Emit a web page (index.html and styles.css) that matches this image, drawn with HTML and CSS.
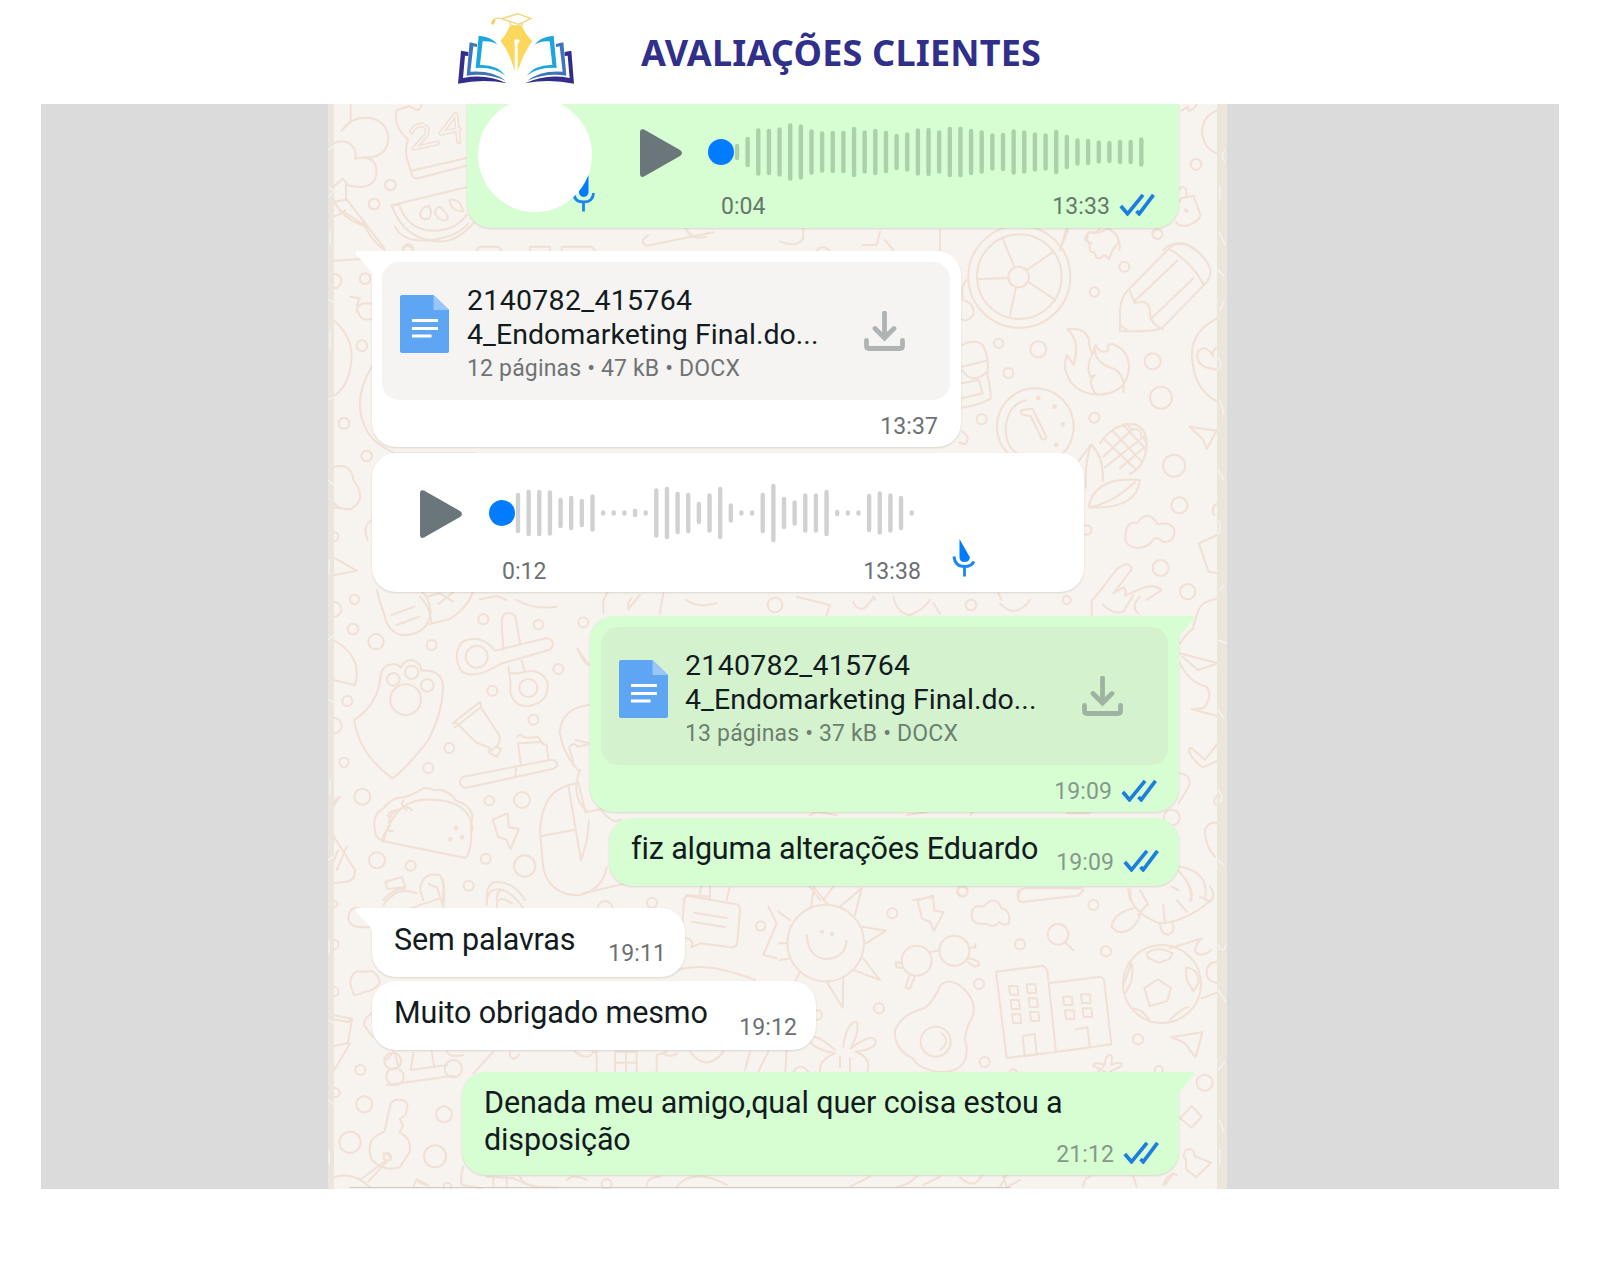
FILE: index.html
```html
<!DOCTYPE html>
<html lang="pt-BR">
<head>
<meta charset="utf-8">
<title>Avaliações Clientes</title>
<link rel="stylesheet" href="styles.css">
</head>
<body>
<svg class="defs" aria-hidden="true">
  <symbol id="checks" viewBox="0 0 36 23"><path d="M1.800 13l6.700 7.800L24 1.800M17.500 18l2.700 2.800L34.500 1.800"/></symbol>
  <symbol id="play" viewBox="0 0 44 50"><path d="M1 4.500Q1 0 5 1.500L41 22q4 3 0 6L5 48.500Q1 50 1 45.500Z"/></symbol>
  <symbol id="doc" viewBox="0 0 49 58">
    <path fill="#5ea6f3" d="M2 0H33.500L49 15V56q0 2-2 2H2q-2 0-2-2V2Q0 0 2 0Z"/>
    <path fill="#98c6f6" d="M33.500 0L49 15H33.500Z"/>
    <path fill="none" stroke="#fff" stroke-width="3.200" d="M12 25.500H38M12 33.500H38M12 41H31.500"/>
  </symbol>
  <symbol id="download" viewBox="0 0 41 41"><path d="M20.500 2V26M11 17.500l9.500 9.500 9.500-9.500M2.500 29.500V35q0 2.500 2.500 2.500H36q2.500 0 2.500-2.500V29.500"/></symbol>
</svg>

<header class="header">
  <svg class="logo" viewBox="0 0 405 270">
    <g fill="#332e8c"><path d="M33 137l22 4v12l-10-1-6 67q70-14 132 16Q100 220 24 236Z"/><path d="M364 137l-20 4v12l9-1 6 67q-70-14-134 16 73-15 147 1Z"/></g>
    <g fill="#3c74bd"><path d="M59 112l22 5v9l-11-2-9 76q65-5 106 27-58-25-117-15Z"/><path d="M340 112l-22 5v9l11-2 9 76q-65-5-106 27 58-25 117-15Z"/></g>
    <g fill="#1ca6df"><path d="M86 92q40 3 57 27-18-12-45-10l-8 71q50-2 77 32-36-27-90-23Z"/><path d="M311 92q-40 3-57 27 18-12 45-10l8 71q-50-2-77 32 36-27 90-23Z"/></g>
    <path fill="#fbd75b" d="M179 63h37q9 24 31 45-26 35-44 91V115q6-2 6-7t-10-5-5 12v84q-15-58-43-91 20-22 28-45Z"/>
    <path fill="none" stroke="#f3d77d" stroke-width="4" d="M155 41l48-15 40 15-38 17Z M155 41q-24-6-29 12M156 41l45-14M180 51v8q18 8 37 0v-6"/>
    <ellipse cx="130" cy="51" rx="5" ry="9" fill="#f3cf68" transform="rotate(25 130 51)"/>
  </svg>
  <h1 class="title">AVALIAÇÕES CLIENTES</h1>
</header>

<main class="panel">
<section class="chat">
  <svg class="wallpaper" viewBox="328 104 899 1085">
    <g transform="translate(320 100) scale(.33333)">
      <path d="M92 15v50L65 92q30-45 85-38 50 10 55 58 0 50-50 60h-25M40 130q40-18 62 14 8 18 3 32M105 176q70-14 64 48-10 50-84 32L68 236l-28 24M78 255v45l-38 5M78 295l115 150M70 335l65 42M40 350q20-5 36-20M40 300q30 60 95 78"/>
      <path d="M270 18l-40 12q-12 50 34 88 -14 40 4 80l10 32q8 8 20 4l145-38M275 212l165-38M270 18q30 25 35-4"/>
      <path d="M275 95q10-22 32-20 22 8 10 32l-35 38 70-16M405 45l-42 55 55-12M408 45l8 80" stroke-width="15"/>
      <path class="cut" d="M275 95q10-22 32-20 22 8 10 32l-35 38 70-16M405 45l-42 55 55-12M408 45l8 80"/>
      <path d="M215 316l240-58M215 316q40 112 155 108 50-6 95-60M240 322q30 74 110 70 60-4 90-48M215 316l25-2M300 345q0-22 25-28 15 20 3 38-20 8-28-10ZM345 340q0-15 14-20 25 20 25 38-25 10-39-18ZM388 300q15-5 32 10l10 24q-38 0-42-34ZM248 446q15-18 30 0"/>
      <circle cx="211" cy="255" r="16"/><circle cx="162" cy="312" r="16"/>
    </g>
    <g transform="translate(320 230) scale(.33333)">
      <path d="M40 92l88-5 20 20M128 -30q20 60 66 90M225 -10q25 50 105 40 80-8 115-50M470 60l10-10h55l10 12M630 62v-12h60v12M725 62v-12h90l10 12M985 15q-30 20-5 32l200-40M1090-20q20 55 70 40M90 200l30 5-10 20M110 245q0-30 44-24M115 245q5 30 38 22M40 270q55 45 55 112-5 84-55 118M155 410q-60 100-18 185 20 45 90 75h240M40 710q55-12 60 40 45 60-10 88l-50-6M30 810l30 25-20-4M155 870q-30 20-12 60M20 970l90 52-70 14M320 1100l40-10 40 25M480 1108l50-10 30 12"/>
      <circle cx="42" cy="153" r="22"/><circle cx="135" cy="146" r="16"/><circle cx="126" cy="347" r="16"/><circle cx="72" cy="580" r="16"/><circle cx="140" cy="678" r="16"/><circle cx="42" cy="920" r="13"/><circle cx="265" cy="58" r="15"/><circle cx="103" cy="1108" r="14"/>
    </g>
    <g transform="translate(760 230) scale(.33333)">
      <circle cx="778" cy="140" r="153"/><circle cx="778" cy="140" r="127"/><circle cx="776" cy="141" r="31"/>
      <path d="M764 113L728 26M800 120l78-53M803 155l82 54M768 172l-18 84M745 144l-93 4M904 50l20-50M620 150q-20 20-10 60 35 10 30 45-20 25-35 12M540 60V0M310 45l40 0 10-40M375 30l25 30M60 35q50 20 70-10V-10M170 62q15-20 40 0"/>
      <path d="M985 8l32 0 26-12q35 15 33 42-22 20-28 50-10-12-18-12-8 14-22 6 0-16-18-18l-2-24-8-10Z"/>
      <path d="M1080 304V240q4-45 32-68L1230 52q28-20 60-5 52 35 62 75 0 26-22 45L1205 295q-20 10-125 9ZM1228 58q65 35 104 108M1125 212L1252 92M1172 268L1300 145M1108 180l17 40q38-15 45 20-5 38 38 58M1080 285l25 18"/>
      <path d="M922 298q50-10 65 30 0 30 10 42l10-26q10 30 38 18-8-20 14-20 48 20 48 70-5 80-95 82-80-4-97-80 0-30 6-38l20 28q22-70-19-106ZM1005 360q-30 40-15 80l14-4-12 15q0 25 18 42M1005 360q0 40 60 58 32 22 25 68"/>
      <circle cx="826" cy="590" r="115"/><path d="M825 686q-90-5-88-95 8-68 60-80"/><path d="M785 540l32-4q12 22 42 85-4 12-14 5l-33-68-24-4q-10-10-3-14Z"/>
      <path d="M606 345q40-20 62 0 22 40 14 90 12 50 10 70-30 20-86 28M606 410l72-18M606 420q30 45 72 8M606 460l50-10 12 40-62 15M606 605q28 15 10 38l-20-5"/>
      <path d="M955 695l38-52q40 40 35 110M993 643q-20 60-15 130M985 832q20-95 155-82-10 90-155 82q70-10 140-76M1020 640q40-60 100-58 40 10 40 60-2 65-50 90M1035 630l95 90M1060 605l85 90M1090 585l70 75M1030 680l90-85M1035 712l120-95M1080 715l70-60M1080 590q20-20 34 10 30-10 30 22 20 5 14 34"/>
      <path d="M1098 905q2-30 34-26 30-45 62 4 48-10 50 25-4 30-34 28-12-14-28-10-18 28-48 28-48-4-36-49ZM1372 265q-80 40-76 115 5 100 76 135M1372 350q-20 15-12 30-20-38-45-18-12 35 22 50l35 8M1288 590l82 12-30 55-12-30ZM1372 915l-55 25 28 85 27 5M1372 820q-20 10-10 35"/>
      <path d="M1000 1108l70-90q40-30 45 0l-55 72 30-18q12 8 5 25l50-22q40-15 60 5l-45 30M340 1100l5 10M715 1090l10 20"/>
      <circle cx="1193" cy="13" r="14"/><circle cx="1093" cy="110" r="15"/><circle cx="1003" cy="186" r="14"/><circle cx="716" cy="340" r="14"/><circle cx="835" cy="358" r="24"/><circle cx="745" cy="429" r="15"/><circle cx="1178" cy="394" r="24"/><circle cx="1203" cy="503" r="33"/><circle cx="665" cy="568" r="15"/><circle cx="1003" cy="563" r="15"/><circle cx="1242" cy="707" r="33"/><circle cx="1258" cy="826" r="24"/><circle cx="1202" cy="1014" r="24"/><circle cx="1283" cy="1085" r="23"/><circle cx="980" cy="900" r="14"/><circle cx="835" cy="504" r="4"/><circle cx="884" cy="530" r="4"/><circle cx="908" cy="583" r="4"/><circle cx="889" cy="644" r="4"/>
    </g>
    <g transform="translate(320 600) scale(.33333)">
      <path d="M170-30q10 40 22 70 10 60 60 66 75-5 80-72-5-50-40-70M215 45l68-25M230 75l68-25M330 72l60-15q60-40 70-90M300-10q30 30 35 80M355 12l50-40M590 0q50 30 120 20M850 40V0l20-35M960-15l-35 42q-5-18 10-32M1030-20l-10 60M1100 0q30 25 90 10"/>
      <path d="M550 150l-5-85q2-28 22-26 20 0 22 25l12 70M525 152l155-38q22 4 17 24-4 12-18 14L540 192M605 182l10 34M525 152q-45-55-100-25-30 40 0 88 40 25 116-23M565 200q10 60 5 75 15 50 60 42 60-10 52-72-20-40-65-30-30 10-50 2"/><circle cx="470" cy="170" r="33"/><circle cx="625" cy="264" r="27"/>
      <path d="M182 222q8-28 38-30 20 3 22 12 10-24 32-24 28 5 30 32 60-5 65 45 0 80-45 165Q255 510 217 535 115 460 103 360q75-50 79-138Z"/><circle cx="257" cy="299" r="46"/><circle cx="220" cy="238" r="19"/><circle cx="275" cy="217" r="20"/><circle cx="322" cy="256" r="19"/>
      <path d="M398 370l82-64 4 18 54 82q5 20-10 35l16 6-15 24-22-14 2-14-40-15-60-60ZM405 382l78-60M508 455q18-15 25-14M592 410q10-10 12-4 10 12 50 4l14 22q18 2 12 10l6 38M602 490l-8-60 74-4M430 530l260-50q20-2 22 12 0 12-18 16L440 563q-20-2-20-16 0-10 10-17ZM588 505l-2 24"/>
      <path d="M165 690q-10-45 25-65 30-35 56-32 20-4 48-18 20-20 50-4 40-8 64 32 40 8 50 45-8 30-4 48 0 60-18 78L185 722q-20-10-20-32ZM190 725q30-120 120-126 140-5 148 90M250 602q-12 12 10 28M236 630q20-20 40 0M205 650q-5-15 30-20M210 680q-10-30 20-50M185 720l15-30 18 4"/>
      <path d="M518 658l45-18 4 42 30 4-26 62-12-30-24-6ZM807 315q-80 8-88 80 10 70 60 120M807 430l-40-10M748 440q15-15 25 0l34-8M760 485l-12-40M780 510q-30 80 22 126l40-8q40 50 60 30M745 556q-80 20-85 140l10 110q20 80 110 80 70-20 80-85M745 556l38 225 18-60 6-60M665 708l96-18M745 556l30-8 22 90M772 145q22 50 35 50l-35-48M40 120q90 50 65 135l-65-15M35 700l70 110q0 35-30 36l-35 4M50 810l30-70M40 785l15-35M35 610l24-20-20 30"/>
      <path d="M196 845l50-14 10 30-54 6ZM190 900q30-35 65-35M300 870q5-55 60-45 20 40 10 90M325 852l25 10M300 870l10 30M500 895q0-50 35-50 50 5 80 55M530 900q0-30 20-30M790 880l120-28M1090 900l10-15 70 5M1170 900v-40"/>
      <circle cx="99" cy="87" r="16"/><circle cx="168" cy="125" r="23"/><circle cx="335" cy="135" r="15"/><circle cx="490" cy="58" r="15"/><circle cx="655" cy="74" r="14"/><circle cx="790" cy="67" r="15"/><circle cx="517" cy="272" r="15"/><circle cx="715" cy="207" r="15"/><circle cx="82" cy="303" r="15"/><circle cx="42" cy="377" r="23"/><circle cx="388" cy="444" r="15"/><circle cx="640" cy="359" r="15"/><circle cx="325" cy="504" r="15"/><circle cx="72" cy="487" r="14"/><circle cx="127" cy="590" r="24"/><circle cx="508" cy="602" r="14"/><circle cx="606" cy="600" r="24"/><circle cx="171" cy="781" r="24"/><circle cx="272" cy="797" r="15"/><circle cx="497" cy="776" r="15"/><circle cx="614" cy="798" r="32"/><circle cx="446" cy="857" r="15"/><circle cx="408" cy="684" r="4"/><circle cx="391" cy="718" r="4"/><circle cx="426" cy="712" r="4"/><circle cx="42" cy="28" r="22"/><circle cx="1365" cy="15" r="22"/>
    </g>
    <g transform="translate(780 600) scale(.33333)">
      <path d="M50-10l100 25-10 30M220 5q5 20 28 22 15-8 30-32M340-10q10 50 50 55 40-15 60-45M480 40l-20-30M660 10q45 50 90-10M970 15q30 30 60 20l30-50M935 45V0M1080-10q-30 30-5 50M1240 80l15-50q10-25 58-35M1200 130q20-30 40-45M1198 160l115 30-60 20-45-40M1200 190q30 60 80 70 20 30-10 65l-35 2 78 22M1235 445l40 35 38-50M1228 450q0 22 40 52l45-20M1235 445q-10-2-8 12M1198 520q40 5 28 40l-30 50M1313 585q-20 20-5 30M1313 670q-25-10-38 20 0 50 30 80M1200 800q90 15 75 100M1200 820q30 20 35 80M1195 870l-20-10M90 645l20-10 60 10M380 645l60-8M570 645l10-8M860 640h70M90 860l30 40M130 900l30-40M715 895q0-30 20-30h170M400 900l60-10M1050 900l-5-35M1195 812q55 60 35 90"/>
      <circle cx="573" cy="15" r="16"/><circle cx="1175" cy="653" r="24"/><circle cx="547" cy="875" r="15"/><circle cx="860" cy="0" r="12"/>
    </g>
    <g transform="translate(320 890) scale(.33333)">
      <path d="M190 45q40-60 100-35M270 55l90-30M350-10l20 60M370-30v60M500 45q0-65 60-40 30 20 50 50M530 50q0-40 45-10M85 80q5-38 45-22M85 80q0 40 70 30M95 260q10-20 30-15l30-2q20 10 25 35-18 25-42 27l-34 12q-20-40-9-57ZM155 370q-30 20-20 40l22 30M40 375l56 12-12 72-44 10M40 388l45 8 10-10M40 545l50-85"/>
      <path d="M1105 18q60 10 145 25 12 5 10 20l-8 95q-2 15-20 14l-90-12-28 12q8-15-6-24-25-5-22-25l6-88q2-18 13-17ZM1122 68l98 16M1116 95l98 16M1140 15l5-40M1220 30l8-35M1345 50q20 40 25 50l-40 95 40 10M1040 255q90-55 265 15M200 510l20-25M225 490l10 40M280 490l-8 50 110-15M335 485l8 46M200 585l200-28M380 485q10 20 50 10M460 550l60-65M570 485v15q15 15 28-8M765 485q40 30 55 0l10 5M830 545V485M885 545V485h65v60M885 518h65M918 485v60M1010 545V495l30-10M1070 490q-8 15-45 0M1110 485q50 65 100 0M1290 485l-15 55M1345 485l-30 60"/>
      <path d="M212 640l12-10q40-5 38 20l-5 25-18 12 10 20-10 20q38 20 30 60l-30 45q-50 15-85-25-20-60 35-80l5-5ZM200 810l-80 60M200 815l-55 60M190 790q20 0 22 20M40 862q60-20 110 30M430 830q-10 30-5 55l60 10M500 860l80 5 70 30M280 892l10-25 35 20-30-10M560 862v30M520 860v28M600 860q10 35 110 32M740 870q20-20 60 0M980 890q0-30 40-30M1070 890q50-60 150-5"/>
      <circle cx="218" cy="513" r="25"/><circle cx="225" cy="560" r="26"/><circle cx="400" cy="536" r="26"/><circle cx="121" cy="540" r="15"/><circle cx="133" cy="643" r="24"/><circle cx="372" cy="673" r="24"/><circle cx="90" cy="757" r="32"/><circle cx="345" cy="799" r="33"/><circle cx="202" cy="801" r="11"/><circle cx="996" cy="38" r="15"/><circle cx="1322" cy="108" r="14"/><circle cx="42" cy="163" r="14"/><circle cx="42" cy="305" r="14"/><circle cx="45" cy="608" r="14"/><circle cx="42" cy="42" r="10"/><circle cx="855" cy="55" r="22"/><circle cx="860" cy="883" r="15"/><circle cx="382" cy="890" r="12"/>
    </g>
    <g transform="translate(780 890) scale(.33333)">
      <circle cx="137" cy="159" r="115"/><path d="M80 135q5 70 60 72 55-2 60-55M92 52l10-60 40 50M180 50l65-55-20 80M248 110l70 12-60 38M250 205l50 65-75-28M140 275l48 78 2-90M22 160h-25M30 205l-30 5M30 90l-35-25M60 245l-15 30M20 480l-4 65"/><circle cx="126" cy="125" r="3"/><circle cx="156" cy="132" r="3"/>
      <path d="M413 32l45-16 5 45 28 6-30 57-10-28-25-10ZM575 75q2-35 35-25 35-40 55 5 28 5 22 45-15 8-30-4-15 20-40 5-40 5-42-26Z"/>
      <circle cx="410" cy="212" r="45"/><circle cx="523" cy="182" r="45"/><path d="M454 185l26-4M365 220l-18-4 2 16 18 2M388 258l-12 36 14 2 14-34M568 175l18-6M586 163v12M565 205q35 5 32 20-10 12-34-10"/>
      <circle cx="834" cy="133" r="31"/><path d="M855 157l25 24"/>
      <path d="M475 300q10-35 55-20 60 40 50 95-35 60-20 95 5 80-85 76-60-10-75-40-60-30-55-85 20-50 90-67 20-15 40-54Z"/><circle cx="467" cy="455" r="45"/><path d="M485 430q30 25-5 50"/>
      <path d="M648 245l142-18 12 14 26 245-148 18ZM806 280l156-20 10 8 22 195-166 23M728 438l36-6 6 62-36 5ZM888 418l34-6 8 60-34 6M687 288h25l3 26h-25ZM740 283h26l3 26h-26ZM692 330h25l3 27h-25ZM746 325h25l3 26h-25ZM696 373h25l3 26h-25ZM750 366h25l3 27h-25ZM849 320h26l3 25h-26ZM903 313h26l3 26h-26ZM855 361h26l3 26h-26ZM908 355h26l3 26h-26Z"/>
      <circle cx="1146" cy="282" r="117"/><path d="M1134 268l39 26-12 40-52 14-16-54ZM1100 190q30-25 78 0l-10 18-32 10-32-14ZM1230 235q28 10 25 45l-15 24-20-34-2-38ZM1032 280l22-60q8 20-2 60l-15 28M1060 355q30 5 48 36M1170 390q40-40 55-38M1170 175l95-30q-20 18-20 40 20 20 48-5M1313 215q-35 0-33 40 5 20 33 25M1265 325l48-18"/>
      <path d="M1172 442l95-15-20 75-20-25q-5-20-55-35ZM715 0q-8 40 15 35l165-18 15-17M1052 0q-10 60 85 100 80-5 150-65M1080 0l25 45M1150 45l5 55M1100 45l-25 30M1190 30l30 35M1290-10q20 30 0 45l-30-15M1060 55q-60 15-65 55 20 30 60 5 25-25 25-45M1140 105q5 30 25 30 25-15 10-40"/>
      <path d="M190 470q10-75 40-75 10 30-18 80 70-50 75-20 0 22-60 30 50 20 35 60M165 480q-70-60-75-30 5 25 75 40-50 20-45 55M210 505v40M180 500v30M40 545q20-30 45 0M975 520q0-25 18-25 5 10 0 30 35-15 32 3l-35 17M975 525q-30-12-35 2l35 18M955 545l15-15"/>
      <path d="M1200 685l35-37 30 32-30 33ZM1213 790q5-20 28-8l2 16 50 20-45 44-30-25v-30q-12-5-5-17ZM1150 885q15-40 40-30M1180 850l-25 35M670 860l10 32 40-22M660 890l20-35M540 862q40 40 65-5M210 890l60-30M350 892q40-10 60-32M430 885l50-25M910 890q0-25 20-30M1060 860l10 30"/>
      <circle cx="337" cy="70" r="15"/><circle cx="548" cy="2" r="15"/><circle cx="940" cy="45" r="15"/><circle cx="720" cy="163" r="15"/><circle cx="978" cy="184" r="15"/><circle cx="597" cy="282" r="15"/><circle cx="297" cy="355" r="15"/><circle cx="614" cy="516" r="15"/><circle cx="1074" cy="448" r="15"/><circle cx="1274" cy="578" r="24"/><circle cx="112" cy="375" r="14"/><circle cx="1136" cy="540" r="12"/><circle cx="700" cy="548" r="10"/>
    </g>
    <g transform="translate(1060 90) scale(.33333)">
      <path d="M365 62l18-12 4 14 16-10 6-10M470 62q-42 15-44 68 8 48 44 60M357 300q10-18 22 0v16M352 345l12-20 36-8 22 58q-5 20-40 32-30 2-34-12M376 358l8 4-6 4ZM20 415L0 480M75 450q5-30 30-22l15-10M150 418q35 25 28 62M75 450l20 10M310 480q40-40 95 0"/>
      <circle cx="408" cy="223" r="16"/><circle cx="292" cy="432" r="15"/>
    </g>
    <path class="edge" d="M328 104h6v1085h-6ZM1217 104h10v1085h-10Z"/>
    <path class="edge-lines" d="M328 150l6-4M328 187l6 4-6 6M330 230v14M328 300l5 2M330 330v20M328 400l6-3M328 480l6 5M329 560v14M328 640l6-5M328 700l5 2M330 780v14M328 860l5-3M329 940v14M328 1020l5 3M328 1100l6 5M329 1150v14M1225 150q-5 6 0 12M1220 186v14M1219 232l6 12M1218 270l6 6M1220 310l4-8M1218 358q6 6 0 12M1220 400l4 14M1218 470l6 10M1218 520q5 7 0 14M1220 590l4-5M1218 640l8 3M1218 710l6 8M1218 790q6 6 2 12M1218 860l6 5M1218 945q5 10 8 0M1218 990l8 12M1218 1070l7-8M1219 1120l5 12M1220 1150v14"/>
    <path class="bottom-line" d="M350 1187.500H1010"/>
  </svg>

  <div class="messages">
    <article class="bubble out audio first">
      <svg class="avatar" viewBox="477 98 124 115">
        <g fill="none" stroke="#1b86ee" stroke-width="2.800"><path d="M574 193q0 9 9.500 9t10-9M583.500 202v9.500"/></g>
        <rect x="579" y="172" width="9.500" height="25" rx="4.700" fill="#027cff"/>
        <circle cx="535" cy="155" r="57" fill="#fff"/>
      </svg>
      <svg class="play"><use href="#play"/></svg>
      <div class="track">
        <svg class="wave" viewBox="0 0 450 60" data-bars="16 30 47 46 49 57 55 45 41 42 42 50 43 46 42 36 39 47 48 43 50 50 46 43 37 38 45 43 39 37 44 34 27 26 23 22 24 24 29"></svg>
        <div class="meta"><span>0:04</span><span class="stamp">13:33<svg class="checks"><use href="#checks"/></svg></span></div>
      </div>
    </article>

    <article class="bubble in tail file">
      <div class="card">
        <svg class="doc"><use href="#doc"/></svg>
        <div class="info">
          <p class="name">2140782_415764<br><span class="rest">4_Endomarketing Final.do...</span></p>
          <p class="detail">12 páginas • 47 kB • DOCX</p>
        </div>
        <svg class="download"><use href="#download"/></svg>
      </div>
      <span class="stamp">13:37</span>
    </article>

    <article class="bubble in audio second">
      <svg class="play"><use href="#play"/></svg>
      <div class="track">
        <svg class="wave" viewBox="0 0 432 60" data-bars="40 46 46 45 30 34 28 37 5 5 5 8 5 49 52 42 40 22 39 52 19 5 5 40 58 32 25 39 39 46 6 5 5 38 43 39 34 5"></svg>
        <div class="meta"><span>0:12</span><span class="stamp">13:38</span></div>
      </div>
      <svg class="mic" viewBox="0 0 26 40"><path fill="#027cff" d="M8.500 0L19 18.500Q18 23 13.500 23 8.500 23 8.500 18Z"/><path fill="none" stroke="#1b86ee" stroke-width="2.800" d="M3 17.500q1 10 10.500 10 7 0 9.500-5M13.500 28v9.500"/></svg>
    </article>

    <article class="bubble out tail file">
      <div class="card">
        <svg class="doc"><use href="#doc"/></svg>
        <div class="info">
          <p class="name">2140782_415764<br><span class="rest">4_Endomarketing Final.do...</span></p>
          <p class="detail">13 páginas • 37 kB • DOCX</p>
        </div>
        <svg class="download"><use href="#download"/></svg>
      </div>
      <span class="stamp">19:09<svg class="checks"><use href="#checks"/></svg></span>
    </article>

    <article class="bubble out text changes">
      <p>fiz alguma alterações Eduardo</p>
      <span class="stamp">19:09<svg class="checks"><use href="#checks"/></svg></span>
    </article>

    <article class="bubble in tail text speechless">
      <p>Sem palavras</p>
      <span class="stamp">19:11</span>
    </article>

    <article class="bubble in text thanks">
      <p>Muito obrigado mesmo</p>
      <span class="stamp">19:12</span>
    </article>

    <article class="bubble out tail text welcome">
      <p>Denada meu amigo,qual quer coisa estou a<br>disposição</p>
      <span class="stamp">21:12<svg class="checks"><use href="#checks"/></svg></span>
    </article>
  </div>
</section>
</main>
<script src="waveform.js"></script>
</body>
</html>
```
FILE: styles.css
```css
* { box-sizing: border-box; }

body {
  margin: 0;
  background: #fff;
  font-family: Roboto, "Liberation Sans", sans-serif;
  color: #121b20;
}

p, h1 { margin: 0; }
svg { display: block; flex: none; }
.defs { display: none; }

.header {
  height: 104px;
  padding: 5px 0 0 450px;
  display: flex;
}
.logo { width: 135px; height: 90px; }
.title {
  margin: 21px 0 0 56px;
  font: 700 36px/54px "Noto Sans", "Open Sans", sans-serif;
  letter-spacing: .2px;
  color: #30308a;
  white-space: nowrap;
}

.panel {
  width: 1518px;
  height: 1085px;
  margin-left: 41px;
  padding-left: 287px;
  background: #dbdbdb;
}
.chat {
  width: 899px;
  height: 1085px;
  display: grid;
  overflow: hidden;
  background: #f7f3ee;
}
.wallpaper, .messages { grid-area: 1 / 1; }
.wallpaper {
  width: 899px;
  height: 1085px;
  fill: none;
  stroke: #f0e0d5;
  stroke-width: 6;
  stroke-linejoin: round;
  stroke-linecap: round;
}
.wallpaper .cut { stroke: #f7f3ee; stroke-width: 6; }
.wallpaper .edge { fill: #ebe5dc; stroke: none; }
.wallpaper .edge-lines { stroke: #f6f2eb; stroke-width: 1.5; }
.wallpaper .bottom-line { stroke: #cfcac5; stroke-width: 1; }

.messages {
  position: relative;
  display: flex;
  flex-direction: column;
  align-items: flex-start;
  padding: 0 48px 0 44px;
}

.bubble {
  position: relative;
  display: flex;
  align-items: flex-start;
  border-radius: 24px;
  box-shadow: 0 1px 2px rgba(70, 60, 40, .16);
  white-space: nowrap;
}
.in { background: #fff; }
.out { background: #d7fdd2; align-self: flex-end; }
.in.tail { border-top-left-radius: 0; }
.out.tail { border-top-right-radius: 0; }
.tail::before {
  content: "";
  position: absolute;
  top: 0;
  width: 18px;
  height: 25px;
  background: inherit;
}
.in.tail::before { left: -17px; clip-path: polygon(2px 0, 100% 0, 100% 100%, 15px 19px, 0 2px); }
.out.tail::before { right: -16px; clip-path: polygon(0 0, 16px 0, 18px 2px, 3px 19px, 0 100%); }

.stamp {
  display: flex;
  font-size: 23px;
  line-height: 28px;
  letter-spacing: .1px;
  color: #6c7073;
}
.out .stamp { color: #84998a; }
.checks {
  width: 36px;
  height: 23px;
  margin: 1px 0 0 9px;
  fill: none;
  stroke: #1c7fdd;
  stroke-width: 3.7;
}

.play { width: 44px; height: 50px; fill: #6b767b; }
.wave { width: 100%; height: 60px; }
.in .wave { stroke: #cfd1d2; }
.out .wave { stroke: #aecfac; }
.wave .dot { fill: #027cff; stroke: none; }
.wave .bars { stroke-width: 4.4; stroke-linecap: round; }
.meta {
  display: flex;
  justify-content: space-between;
  padding-left: 13px;
  font-size: 23px;
  line-height: 28px;
  color: #6c7073;
}
.out .meta, .out .meta .stamp { color: #64796b; }
.meta .checks { margin-top: 0; }

.first {
  width: 712px;
  height: 124px;
  padding-left: 10px;
  margin-bottom: 23px;
  border-top-left-radius: 0;
  border-top-right-radius: 0;
}
.avatar { width: 124px; height: 115px; margin-top: -6px; }
.first .play { margin: 24px 25px 0 38px; }
.first .track { width: 447px; padding-top: 18px; }
.first .wave { width: 450px; }
.first .meta { margin-top: 11px; }

.second {
  width: 712px;
  height: 139px;
  padding-left: 47px;
  margin-bottom: 24px;
}
.second .play { margin: 36px 26px 0 0; }
.second .track { width: 432px; padding-top: 30px; }
.second .meta { margin-top: 15px; }
.mic { width: 26px; height: 40px; margin: 86px 0 0 30px; }

.file {
  flex-direction: column;
  width: 589px;
  height: 196px;
  padding: 11px 10px 0;
  margin-bottom: 6px;
}
.out.file { padding-left: 11px; }
.card {
  display: flex;
  align-items: flex-start;
  width: 568px;
  height: 138px;
  padding: 22px 0 0 18px;
  border-radius: 17px;
  background: #f5f4f2;
}
.out .card { width: 567px; background: #d5f2cf; }
.doc { width: 49px; height: 58px; margin-top: 11px; }
.info { width: 397px; margin-left: 18px; }
.out .info { margin-left: 17px; }
.name { font-size: 28.5px; line-height: 34px; letter-spacing: .3px; }
.rest { letter-spacing: .02px; }
.detail { margin-top: 2px; font-size: 23px; line-height: 30px; letter-spacing: .17px; color: #6f7375; }
.out .detail { color: #6c806f; }
.download {
  width: 41px;
  height: 41px;
  margin-top: 27px;
  fill: none;
  stroke: #b0b3b4;
  stroke-width: 4.8;
  stroke-linecap: round;
}
.out .download { stroke: #9eb4a1; }
.file .stamp { align-self: flex-end; margin: 13px 13px 0 0; }
.out.file .stamp { margin-right: 12px; }

.text {
  height: 68px;
  justify-content: space-between;
  padding: 12px 20px 0 22px;
  font-size: 30.5px;
  line-height: 37px;
  letter-spacing: -.14px;
}
.text .stamp { margin-top: 19px; }
.text .checks { margin-top: 0; }
.changes { width: 570px; margin-bottom: 22px; }
.speechless { width: 313px; height: 69px; padding-top: 13px; margin-bottom: 4px; }
.speechless .stamp { margin: 19px -1px 0 0; }
.thanks { width: 444px; height: 69px; padding-top: 13px; margin-bottom: 22px; }
.thanks .stamp { margin: 20px -1px 0 0; }
.welcome { width: 717px; height: 103px; padding-top: 13px; line-height: 36.5px; }
.welcome .stamp { margin: 56px 0 0 -60px; }
```
FILE: waveform.js
```js
// Draws the playhead and the amplitude bars of every voice message.
const NS = "http://www.w3.org/2000/svg";
const START = 29;
const STEP = 10.64;

document.querySelectorAll(".wave").forEach((wave) => {
  const d = wave.dataset.bars.split(" ").map((height, i) => {
    const length = Math.max(Number(height) - 4, 0.5);
    return `M${START + i * STEP} ${30 - length / 2}v${length}`;
  }).join("");

  const bars = document.createElementNS(NS, "path");
  bars.setAttribute("class", "bars");
  bars.setAttribute("d", d);

  const dot = document.createElementNS(NS, "circle");
  dot.setAttribute("class", "dot");
  dot.setAttribute("cx", 13);
  dot.setAttribute("cy", 30);
  dot.setAttribute("r", 13);

  wave.append(bars, dot);
});
```
